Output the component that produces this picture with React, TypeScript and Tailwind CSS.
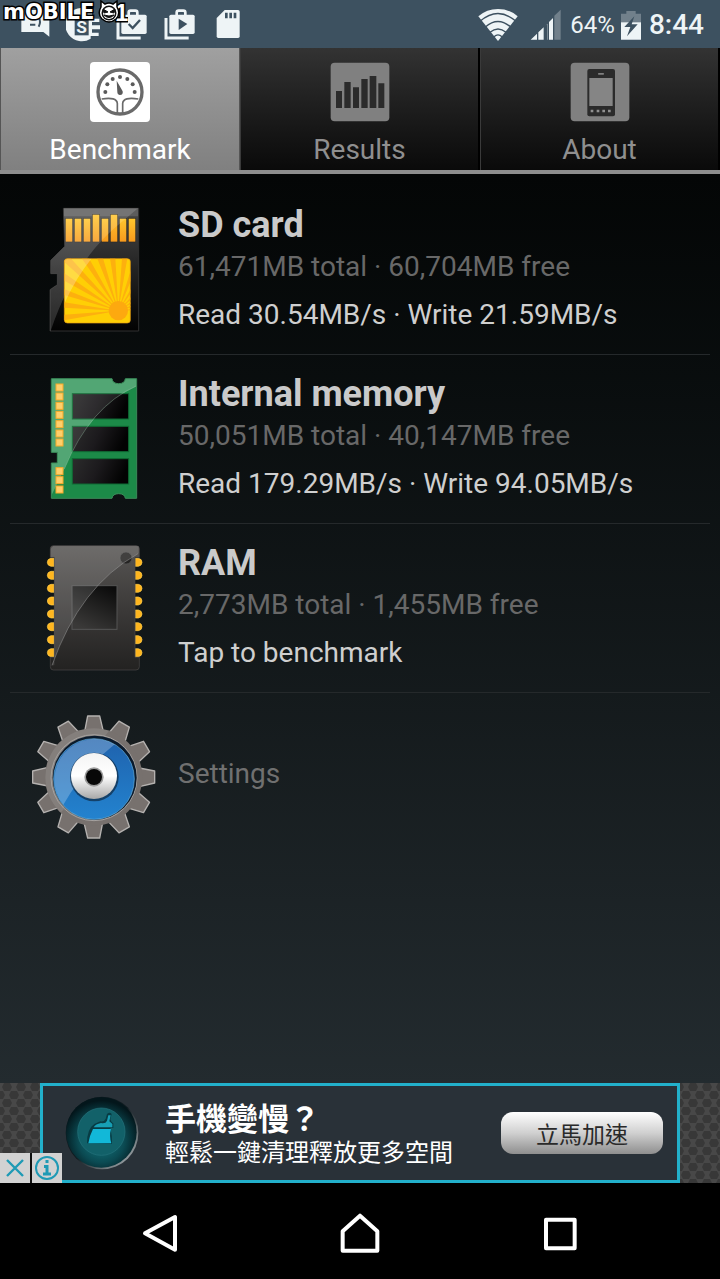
import { useState } from 'react';
import type { ReactNode } from 'react';

const ChatIcon = () => (
  <svg className="h-9 w-9" viewBox="0 0 108 108">
    <path d="M10 12H94V92L76 78H10Z" fill="#eef4f6" />
    <path d="M36 40H52M36 56H52M62 34q8 14 0 28" stroke="#3d5160" strokeWidth="6" fill="none" />
  </svg>
);

const SyncIcon = () => (
  <svg className="h-9 w-9" viewBox="0 0 108 108">
    <path d="M78 16A50 50 0 1 0 74 98V90H98V80H78V70H102V58H78V48H100V38H78Z" fill="#eef4f6" />
    <rect x="26" y="34" width="42" height="54" fill="#3d5160" />
    <text x="47" y="80" textAnchor="middle" fontSize="52" fontWeight="700" fill="#eef4f6" fontFamily="Roboto">
      S
    </text>
  </svg>
);

const Briefcase = ({ children }: { children: ReactNode }) => (
  <svg className="h-9 w-9" viewBox="0 0 108 108">
    <path d="M12 36V96H80" stroke="#eef4f6" strokeWidth="9" fill="none" />
    <path d="M44 28V20q0-6 6-6h14q6 0 6 6v8" stroke="#eef4f6" strokeWidth="8" fill="none" />
    <rect x="22" y="26" width="76" height="58" rx="5" fill="#eef4f6" />
    {children}
  </svg>
);

const CardIcon = () => (
  <svg className="h-9 w-9" viewBox="0 0 108 108">
    <path d="M44 12H84q5 0 5 5V91q0 5-5 5H25q-5 0-5-5V36Z" fill="#eef4f6" />
    <path d="M49 20V37M62 20V37M75 20V37" stroke="#3d5160" strokeWidth="8" />
  </svg>
);

const WifiIcon = () => (
  <svg className="h-8 w-10" viewBox="0 0 120 96">
    <path d="M60 96L1 22Q26 0 60 0T119 22Z" fill="#eef4f6" />
    <path d="M6 37Q60-10 114 37M22 54Q60 21 98 54M36 70Q60 50 84 70M48 83Q60 72 72 83" stroke="#3d5160" strokeWidth="4" fill="none" />
  </svg>
);

const SignalIcon = () => (
  <svg className="h-8 w-8" viewBox="0 0 96 96">
    <path d="M73 20L92 2V92H73Z" fill="#71808b" />
    <path d="M2 92L21 74V92ZM25 70L41 55V92H25ZM46 50L46 92H51V46ZM46 50L52 44V92H46ZM57 39L69 27V92H57Z" fill="#eef4f6" />
  </svg>
);

const BatteryIcon = () => (
  <svg className="h-8 w-5" viewBox="0 0 60 96">
    <path d="M16 6H44V14H60V92H0V14H16Z" fill="#71808b" />
    <path d="M0 40H60V92H0Z" fill="#eef4f6" />
    <path d="M40 22L10 54H28L18 82L50 46H32Z" fill="#3d5160" />
  </svg>
);

const Watermark = () => (
  <svg className="absolute top-0 left-0 h-7 w-32" viewBox="0 0 128 28" aria-label="Mobile01">
    <g fill="#fff" stroke="#000" strokeWidth="3" paintOrder="stroke" fontFamily="DejaVu Sans">
      <text x="3" y="19" fontSize="21" fontWeight="700">
        mOBILE
      </text>
      <text x="115" y="21" fontSize="24" fontWeight="700" fontFamily="Liberation Sans Narrow, Liberation Sans">
        1
      </text>
    </g>
    <path d="M101 1L105 4Q109 2 113 4L117 1L117 7Q121 14 116 19Q109 25 102 19Q97 14 101 7Z" fill="#fff" stroke="#000" strokeWidth="1.5" />
    <circle cx="109" cy="13" r="7.5" fill="#111" />
    <circle cx="109" cy="13" r="6" fill="#fff" />
    <path d="M103 9L108 12L104 13ZM115 9L110 12L114 13ZM104 15Q109 20 114 15Q109 17 104 15Z" fill="#111" stroke="#111" />
  </svg>
);

const GaugeIcon = () => (
  <svg className="h-15 w-15" viewBox="0 0 180 180">
    <rect width="180" height="180" rx="12" fill="#fff" />
    <g fill="none" stroke="#6a6a6a">
      <circle cx="90" cy="90" r="66" strokeWidth="10" />
      <path d="M35 111Q80 104 82 124V153M145 111Q100 104 98 124V153" strokeWidth="5" />
    </g>
    <g fill="#5a5a5a">
      <path d="M80 56L98 88Q100 99 90 99Q82 98 82 90Z" />
      <circle cx="46" cy="90" r="6" />
      <circle cx="52" cy="67" r="6" />
      <circle cx="68" cy="51" r="6" />
      <circle cx="90" cy="45" r="6" />
      <circle cx="112" cy="51" r="6" />
      <circle cx="128" cy="67" r="6" />
      <circle cx="134" cy="90" r="6" />
    </g>
  </svg>
);

const BarsIcon = () => (
  <svg className="h-15 w-15" viewBox="0 0 180 180">
    <rect x="2" y="2" width="176" height="176" rx="12" fill="#808080" />
    <path
      d="M18 87h18v51h-18zM43 60h19v78h-19zM69 76h18v62h-18zM94 51h19v87h-19zM119 42h20v96h-20zM145 64h18v74h-18z"
      fill="#2b2b2b"
    />
  </svg>
);

const PhoneIcon = () => (
  <svg className="h-15 w-15" viewBox="0 0 180 180">
    <rect x="2" y="2" width="176" height="176" rx="12" fill="#808080" />
    <rect x="52" y="21" width="83" height="142" rx="6" fill="#2b2b2b" />
    <rect x="58" y="48" width="70" height="84" fill="#858585" />
    <rect x="84" y="33" width="18" height="5" rx="2" fill="#808080" />
    <path d="M62 147h8M80 147h8M97 147h8M114 147h8" stroke="#909090" strokeWidth="8" />
  </svg>
);

const rays = Array.from({ length: 15 }, (_, i) => {
  const a = ((i * 13 + 170) * Math.PI) / 180;
  const b = a + 0.1;
  return `M265 363L${265 + 300 * Math.cos(a)} ${363 + 300 * Math.sin(a)}L${265 + 300 * Math.cos(b)} ${363 + 300 * Math.sin(b)}Z`;
}).join('');

const pins = [
  [107, 87],
  [134, 87],
  [161, 87],
  [188, 75],
  [215, 87],
  [242, 75],
  [269, 87],
  [296, 87],
];

const SdCardArt = () => (
  <svg className="h-[150px] w-[130px] shrink-0" viewBox="0 16 390 450">
    <defs>
      <linearGradient id="sdBody" x1="0" y1="0" x2="0" y2="1">
        <stop offset="0" stopColor="#484848" />
        <stop offset="0.5" stopColor="#222" />
        <stop offset="1" stopColor="#020202" />
      </linearGradient>
      <linearGradient id="sdPin" x1="0" y1="0" x2="0" y2="1">
        <stop offset="0" stopColor="#ffc62e" />
        <stop offset="1" stopColor="#f79a1d" />
      </linearGradient>
      <clipPath id="sdLabel">
        <rect x="103" y="207" width="198" height="193" rx="9" />
      </clipPath>
      <clipPath id="sdClip">
        <path d="M100 56H326V424H60V300L68 294L82 285V252H62V212L104 170Z" />
      </clipPath>
    </defs>
    <path d="M100 56H326V424H60V300L82 285V252H62V212L104 170Z" fill="url(#sdBody)" stroke="#303030" strokeWidth="3" />
    <path d="M102 56H324V80H102Z" fill="#5c5c5c" />
    {pins.map(([x, y]) => (
      <rect key={x} x={x} y={y} width="20" height={156 - y} fill="url(#sdPin)" stroke="#222" strokeWidth="3" paintOrder="stroke" />
    ))}
    <path d="M0 0H390L260 110Q130 220 62 424H0Z" fill="#fff" opacity="0.15" clipPath="url(#sdClip)" />
    <g clipPath="url(#sdLabel)">
      <rect x="100" y="200" width="210" height="210" fill="#ffcf05" />
      <path d={rays} fill="#fdb00e" />
      <circle cx="265" cy="363" r="29" fill="#fda90f" />
      <path d="M100 200H190Q140 260 104 340Z" fill="#fff" opacity="0.25" />
    </g>
    <rect x="103" y="207" width="198" height="193" rx="9" fill="none" stroke="#e79b12" strokeWidth="2" />
  </svg>
);

const MemoryArt = () => (
  <svg className="h-[150px] w-[130px] shrink-0" viewBox="0 13 390 450">
    <defs>
      <linearGradient id="chip" x1="0" y1="0" x2="1" y2="0.2">
        <stop offset="0" stopColor="#2c2c2c" />
        <stop offset="0.5" stopColor="#1c1a1d" />
        <stop offset="1" stopColor="#020202" />
      </linearGradient>
      <clipPath id="board">
        <path d="M64 57H246Q248 72 266 72T286 57H320V416H286Q284 402 266 402T246 416H64V310H82V278H64Z" />
      </clipPath>
    </defs>
    <g clipPath="url(#board)">
      <rect x="60" y="50" width="270" height="370" fill="#1c8a48" />
      <path d="M60 50H330V75Q180 140 103 328L60 416Z" fill="#fff" opacity="0.18" />
      {[102, 200, 297].map((y) => (
        <rect key={y} x="127" y={y} width="169" height="76" fill="url(#chip)" stroke="#0f6b34" strokeWidth="3" />
      ))}
      <path d="M60 50H330V75Q180 140 103 328L60 416Z" fill="#fff" opacity="0.08" />
      <path d="M320 78Q180 140 103 328" fill="none" stroke="#9cc9ab" strokeWidth="2" opacity="0.5" />
    </g>
    {[73, 100, 128, 155, 183, 211, 238, 324, 351, 379].map((y) => (
      <rect key={y} x="78" y={y} width="21" height="21" fill="#ffcf6b" stroke="#f7a928" strokeWidth="3" />
    ))}
    <path d="M64 57H246Q248 72 266 72T286 57H320V416H286Q284 402 266 402T246 416H64V310H82V278H64Z" fill="none" stroke="#3c8f5b" strokeWidth="3" />
  </svg>
);

const RamArt = () => (
  <svg className="h-[150px] w-[130px] shrink-0" viewBox="0 11 390 450">
    <defs>
      <linearGradient id="ramBody" x1="0" y1="0" x2="0" y2="1">
        <stop offset="0" stopColor="#585654" />
        <stop offset="0.5" stopColor="#3c3a39" />
        <stop offset="1" stopColor="#232221" />
      </linearGradient>
      <linearGradient id="ramDie" x1="0.8" y1="0" x2="0.3" y2="1">
        <stop offset="0" stopColor="#0b0b0b" />
        <stop offset="1" stopColor="#3a3938" />
      </linearGradient>
    </defs>
    {[99, 138, 177, 215, 254, 292, 331, 370].map((y) => (
      <g key={y} fill="#ffb61f" stroke="#ffcf4d" strokeWidth="2">
        <path d={`M72 ${y - 12}H63Q52 ${y - 10} 52 ${y}T63 ${y + 12}H72Z`} />
        <path d={`M316 ${y - 12}H325Q336 ${y - 10} 336 ${y}T325 ${y + 12}H316Z`} />
      </g>
    ))}
    <path
      d="M70 49H318Q328 49 328 58V84H315V384H328V412Q328 422 318 422H70Q61 422 61 412V384H73V84H61V58Q61 49 70 49Z"
      fill="url(#ramBody)"
      stroke="#4b4948"
      strokeWidth="2"
    />
    <circle cx="288" cy="86" r="18" fill="#252423" stroke="#555" strokeWidth="2" />
    <rect x="126" y="169" width="135" height="131" fill="url(#ramDie)" stroke="#555" strokeWidth="3" />
    <path d="M70 50H326V72Q150 170 66 408H73V84H62V58Z" fill="#fff" opacity="0.13" />
    <path d="M324 73Q150 170 66 408" fill="none" stroke="#999" strokeWidth="3" opacity="0.5" />
  </svg>
);

const GearArt = () => (
  <svg className="h-[150px] w-[130px] shrink-0" viewBox="30 10 390 450">
    <defs>
      <linearGradient id="hub" x1="0" y1="0" x2="0" y2="1">
        <stop offset="0" stopColor="#f4f4f4" />
        <stop offset="0.5" stopColor="#fff" />
        <stop offset="1" stopColor="#a8a8a8" />
      </linearGradient>
      <linearGradient id="blue" x1="0" y1="0" x2="0" y2="1">
        <stop offset="0" stopColor="#1f62ad" />
        <stop offset="1" stopColor="#2383cf" />
      </linearGradient>
      <clipPath id="disc">
        <circle cx="222" cy="232" r="146" />
      </clipPath>
    </defs>
    {Array.from({ length: 12 }, (_, i) => (
      <path
        key={i}
        d="M194 95L203 49H239L250 95Z"
        fill="#77716e"
        stroke="#b5b2b0"
        strokeWidth="4"
        strokeLinejoin="round"
        transform={`rotate(${i * 30} 221 232)`}
      />
    ))}
    <circle cx="221" cy="232" r="146" fill="#77716e" />
    <path d="M0 0H345Q220 130 130 330L60 400H0Z" fill="#fff" opacity="0.1" clipPath="url(#disc)" />
    <circle cx="222" cy="234" r="129" fill="none" stroke="#a5a2a0" strokeWidth="3" />
    <circle cx="224" cy="234" r="126" fill="#0a1a2c" />
    <circle cx="222" cy="238" r="121" fill="url(#blue)" stroke="#67b0dc" strokeWidth="2" />
    <path d="M284 134A121 121 0 0 0 130 315Q190 210 284 134Z" fill="#fff" opacity="0.24" />
    <circle cx="223" cy="232" r="73" fill="#0a1a2c" opacity="0.6" />
    <circle cx="222" cy="229" r="69" fill="url(#hub)" />
    <circle cx="222" cy="232" r="29" fill="#9a9a9a" />
    <circle cx="222" cy="232" r="24" fill="#080808" />
  </svg>
);

const OrbArt = () => (
  <svg className="h-[74px] w-[74px] shrink-0" viewBox="0 0 222 222">
    <defs>
      <radialGradient id="orbGlow" cx="0.5" cy="0.6" r="0.55">
        <stop offset="0" stopColor="#137f87" />
        <stop offset="0.6" stopColor="#0b4a52" />
        <stop offset="1" stopColor="#03161b" />
      </radialGradient>
      <linearGradient id="orbRim" x1="0" y1="0" x2="1" y2="1">
        <stop offset="0.5" stopColor="#101b20" />
        <stop offset="1" stopColor="#c5cbce" />
      </linearGradient>
    </defs>
    <circle cx="111" cy="111" r="109" fill="url(#orbRim)" />
    <circle cx="109" cy="109" r="106" fill="url(#orbGlow)" />
    <circle cx="109" cy="107" r="71" fill="#126169" stroke="#25727b" strokeWidth="2" />
    <path d="M66 142Q66 98 88 84L106 76Q118 78 122 68L126 54Q134 46 140 54L136 70Q138 78 145 82V96H136Q142 120 141 144Z" fill="#083c44" />
    <path d="M70 142Q74 118 84 99H138Q132 120 139 142Z" fill="#12b8d8" />
    <path d="M86 94Q92 84 108 81Q122 84 126 74L130 58L137 58L133 76L142 84V94Z" fill="#179fb5" />
  </svg>
);

const tabs = [
  { name: 'Benchmark', icon: <GaugeIcon /> },
  { name: 'Results', icon: <BarsIcon /> },
  { name: 'About', icon: <PhoneIcon /> },
];

const devices = [
  {
    name: 'SD card',
    usage: '61,471MB total · 60,704MB free',
    result: 'Read 30.54MB/s · Write 21.59MB/s',
    art: <SdCardArt />,
  },
  {
    name: 'Internal memory',
    usage: '50,051MB total · 40,147MB free',
    result: 'Read 179.29MB/s · Write 94.05MB/s',
    art: <MemoryArt />,
  },
  {
    name: 'RAM',
    usage: '2,773MB total · 1,455MB free',
    result: 'Tap to benchmark',
    art: <RamArt />,
  },
];

const StatusBar = () => (
  <header className="relative flex h-12 items-center justify-between bg-[#3d5160] pr-4 pl-3 text-[#eef4f6]">
    <div className="flex *:mx-1.5">
      <ChatIcon />
      <SyncIcon />
      <Briefcase>
        <path d="M44 54L56 66L78 42" stroke="#3d5160" strokeWidth="7" fill="none" />
      </Briefcase>
      <Briefcase>
        <path d="M50 38L76 54L50 72Z" fill="#3d5160" />
      </Briefcase>
      <CardIcon />
    </div>
    <div className="flex items-center pt-0.5">
      <WifiIcon />
      <span className="ml-3">
        <SignalIcon />
      </span>
      <span className="ml-2 text-2xl">64%</span>
      <span className="mr-2 ml-1.5">
        <BatteryIcon />
      </span>
      <span className="text-[28px] font-medium">8:44</span>
    </div>
    <Watermark />
  </header>
);

const HexPattern = () => (
  <svg className="absolute inset-0 h-full w-full">
    <defs>
      <pattern id="hex" width="14" height="16" patternUnits="userSpaceOnUse">
        <rect width="14" height="16" fill="#484848" />
        <path d="M4 0H10L12 4L10 8H4L2 4Z" fill="#383838" />
        <path d="M-3 8H3L5 12L3 16H-3L-5 12ZM11 8H17L19 12L17 16H11L9 12Z" fill="#383838" />
      </pattern>
    </defs>
    <rect width="100%" height="100%" fill="url(#hex)" />
  </svg>
);

const AdBanner = () => (
  <aside className="relative px-10 font-['Noto_Sans_CJK_TC',sans-serif]">
    <HexPattern />
    <div className="relative flex h-[100px] items-center border-[3px] border-[#22b0cb] bg-[#293138] pr-3.5 pl-[22px]">
      <OrbArt />
      <div className="ml-[26px] flex-1 text-white">
        <p className="text-[31px] leading-9 font-bold">手機變慢？</p>
        <p className="text-2xl leading-8">輕鬆一鍵清理釋放更多空間</p>
      </div>
      <button className="h-[42px] w-[162px] rounded-xl bg-linear-to-b from-white via-[#d0d0d0] to-[#8f8f8f] text-[23px] leading-none text-[#2a2a2a]">
        立馬加速
      </button>
    </div>
    <div className="absolute bottom-0 left-0 flex gap-0.5 bg-[#111]">
      <button aria-label="Close ad" className="h-[30px] w-[30px] bg-[#d2d2d2]">
        <svg viewBox="0 0 30 30">
          <path d="M7 7L23 23M23 7L7 23" stroke="#1f9ab5" strokeWidth="2.4" />
        </svg>
      </button>
      <button aria-label="Ad info" className="h-[30px] w-[30px] bg-[#d2d2d2]">
        <svg viewBox="0 0 30 30" fill="none" stroke="#1f9ab5">
          <circle cx="15" cy="15" r="11" strokeWidth="2" />
          <path d="M15 7V10M12 13.5H15V21M11 21H19" strokeWidth="3" />
        </svg>
      </button>
    </div>
  </aside>
);

const NavBar = () => (
  <nav className="grid h-24 grid-cols-3 bg-black px-15 pt-1">
    <button aria-label="Back" className="flex items-center justify-center">
      <svg className="h-10 w-10" viewBox="0 0 120 120" fill="none" stroke="#fff" strokeWidth="12" strokeLinejoin="round">
        <path d="M15 61L105 12V110Z" />
      </svg>
    </button>
    <button aria-label="Home" className="flex items-center justify-center">
      <svg className="h-10 w-10" viewBox="0 0 120 120" fill="none" stroke="#fff" strokeWidth="12" strokeLinejoin="round">
        <path d="M60 8L112 55V113H8V55Z" />
      </svg>
    </button>
    <button aria-label="Recent apps" className="flex items-center justify-center">
      <svg className="h-10 w-10" viewBox="0 0 120 120" fill="none" stroke="#fff" strokeWidth="12" strokeLinejoin="round">
        <rect x="18" y="20" width="86" height="86" />
      </svg>
    </button>
  </nav>
);

export default function App() {
  const [active, setActive] = useState('Benchmark');

  return (
    <div className="flex min-h-screen flex-col bg-black font-[Roboto,sans-serif]">
      <StatusBar />
      <div role="tablist" className="grid grid-cols-3 border-b-4 border-[#8e8e8e] bg-black">
        {tabs.map((tab) => (
          <button
            key={tab.name}
            role="tab"
            aria-selected={active === tab.name}
            onClick={() => setActive(tab.name)}
            className={
              active === tab.name
                ? 'flex flex-col items-center border-x border-[#555] bg-linear-to-b from-[#a0a0a0] to-[#808080] pt-3.5 text-white'
                : 'flex flex-col items-center border-r-2 border-l border-r-black border-l-[#3a3a3a] bg-linear-to-b from-[#333] to-[#0a0a0a] pt-3.5 text-[#8f8f8f]'
            }
          >
            {tab.icon}
            <span className="mt-2 text-[28px] leading-10">{tab.name}</span>
          </button>
        ))}
      </div>
      <main className="flex-1 bg-linear-to-b from-[#040606] to-[#232b2f] px-2.5 pt-3">
        {devices.map((device) => (
          <button
            key={device.name}
            className="flex h-[169px] w-full items-center gap-[18px] border-b border-[#25292b] pl-5 text-left"
          >
            {device.art}
            <span className="flex flex-col">
              <span className="mb-0.5 text-4xl leading-10 font-bold text-[#cacaca]">{device.name}</span>
              <span className="text-[28px] leading-10 text-[#686868]">{device.usage}</span>
              <span className="mt-2 text-[28px] leading-10 text-[#cfcfcf]">{device.result}</span>
            </span>
          </button>
        ))}
        <button className="flex h-[169px] w-full items-center gap-[18px] pl-5 text-left">
          <GearArt />
          <span className="pb-2 text-[28px] leading-10 text-[#707070]">Settings</span>
        </button>
      </main>
      <AdBanner />
      <NavBar />
    </div>
  );
}
